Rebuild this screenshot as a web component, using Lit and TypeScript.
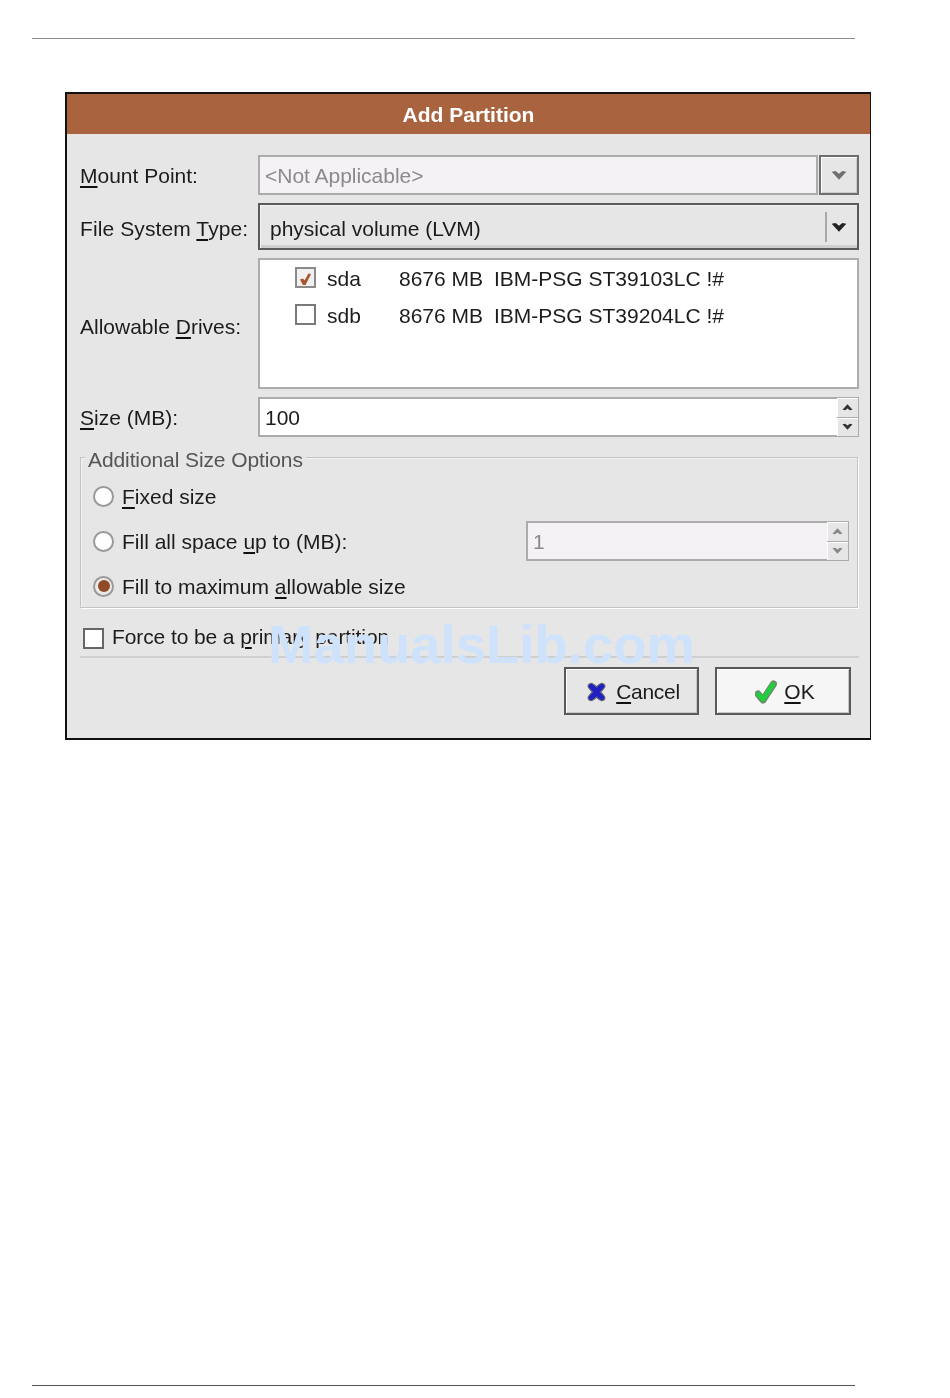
import { LitElement, html, css } from "lit";
import { customElement } from "lit/decorators.js";

const chevron = (size: number, color: string) => html`<svg width=${size} height=${size} viewBox="0 0 12 12"><path d="M0.5 3.5 L3.5 3 L6 5 L8.5 3 L11.5 3.5 L6 9.5 Z" fill=${color}></path></svg>`;
const chevronUp = (size: number, color: string) => html`<svg width=${size} height=${size} viewBox="0 0 12 12"><path d="M0.5 8.5 L3.5 9 L6 7 L8.5 9 L11.5 8.5 L6 2.5 Z" fill=${color}></path></svg>`;

@customElement("app-root")
export class AppRoot extends LitElement {
  static styles = css`
    :host { display: block; }
    .page {
      position: relative; height: 1398px; box-sizing: border-box; background: #fff;
      display: flex; flex-direction: column; padding: 38px 0 12px 32px;
      font-family: "Liberation Sans", Arial, sans-serif; font-size: 21px; color: #1c1c1c;
    }
    .rule { width: 823px; height: 1px; background: #8c8c8c; flex: none; }
    .rule.bottom { margin-top: auto; background: #555; }
    .dialog {
      width: 806px; height: 648px; box-sizing: border-box; margin: 53px 0 0 33px;
      border: 2px solid #111; border-right-width: 1px; background: #e6e6e6;
      display: flex; flex-direction: column; filter: blur(0.45px);
    }
    .title {
      height: 40px; box-sizing: border-box; padding-top: 2px; flex: none; background: #a9643f; color: #fff; font-weight: 700;
      display: flex; align-items: center; justify-content: center;
    }
    .body { padding: 21px 11px 0 13px; display: flex; flex-direction: column; }
    .form { display: grid; grid-template-columns: 178px 1fr; grid-template-rows: 40px 47px 131px 40px; row-gap: 8px; }
    .label { display: flex; align-items: center; white-space: nowrap; padding-top: 2px; box-sizing: border-box; }
    .label.mid { padding-top: 4px; letter-spacing: 0.1px; }
    .label.low { padding-top: 6px; }
    u { text-decoration-thickness: 2px; text-underline-offset: 3px; text-decoration-color: #111; }
    .mount { display: flex; gap: 1px; }
    .entry {
      flex: 1; box-sizing: border-box; border: 2px solid #acacac; display: flex; align-items: center;
      padding: 2px 0 0 5px; background: #fff; min-width: 0;
    }
    .entry.off { background: #f5f2f6; color: #8a8a8a; letter-spacing: -0.02px; }
    .drop {
      width: 40px; flex: none; box-sizing: border-box; border: 2px solid #6e6e6e; background: #e6e6e6;
      box-shadow: inset 1px 1px 0 #fff, inset -1px -1px 0 #ccc;
      display: flex; align-items: center; justify-content: center;
    }
    .combo {
      box-sizing: border-box; border: 2px solid #5a5a5a; background: #e6e6e6; display: flex; align-items: center;
      padding: 0 10px 0 10px; box-shadow: inset 1px 1px 0 #f4f4f4, inset 0 -3px 0 #cfcfcf;
    }
    .combo .value { flex: 1; padding-top: 4px; }
    .combo .sep { width: 2px; height: 30px; background: #a8a8a8; margin-right: 4px; }
    .list {
      box-sizing: border-box; border: 2px solid #adadad; background: #fff; padding: 0 0 0 35px;
      display: flex; flex-direction: column;
    }
    .drive { height: 37px; display: grid; grid-template-columns: 32px 72px 95px 1fr; align-items: center; white-space: nowrap; }
    .check {
      box-sizing: border-box; width: 21px; height: 21px; border: 2px solid #666; background: #fff; display: block;
    }
    .list .check { border-color: #7a7a7a; margin-top: -2px; }
    .list .check.on { background: #f2efef; border-color: #8a8a8a; }
    .spin { display: flex; box-sizing: border-box; border: 2px solid #acacac; background: #fff; }
    .spin.off { background: #f5f2f6; color: #8a8a8a; width: 323px; height: 40px; flex: none; margin-left: auto; }
    .spin .num { flex: 1; padding: 2px 0 0 5px; display: flex; align-items: center; }
    .spin .btns { width: 21px; display: flex; flex-direction: column; gap: 1px; background: #acacac; margin: -1px -1px -1px 0; }
    .spin .btns span {
      flex: 1; background: #e6e6e6; box-shadow: inset 1px 1px 0 #fff;
      display: flex; align-items: center; justify-content: center;
    }
    .group {
      position: relative; box-sizing: border-box; height: 151px; margin: 20px 1px 0 0; border: 1px solid #c4c4c4;
      padding: 18px 8px 0 12px;
      display: flex; flex-direction: column; gap: 5px; box-shadow: 1px 1px 0 #fff, inset 1px 1px 0 #f2f2f2;
    }
    .legend {
      position: absolute; left: 4px; top: -10px; padding: 0 3px; background: #e6e6e6; color: #555; line-height: 24px; letter-spacing: -0.1px;
    }
    .opt { height: 40px; display: flex; align-items: center; gap: 8px; white-space: nowrap; }
    .opt .txt { padding-top: 2px; }
    .radio {
      flex: none; width: 21px; height: 21px; box-sizing: border-box; border-radius: 50%; border: 2px solid #999; background: #fff;
      display: flex; align-items: center; justify-content: center;
    }
    .radio i { display: block; width: 12px; height: 12px; border-radius: 50%; background: #8f4a28; }
    .radio.on { background: #ece8e8; }
    .force { height: 36px; margin: 12px 0 0 3px; display: flex; align-items: center; gap: 8px; white-space: nowrap; }
    .force .txt { letter-spacing: -0.1px; margin-top: -2px; }
    .sep-h { height: 2px; background: #cfcfcf; }
    .buttons { display: flex; justify-content: flex-end; gap: 16px; padding: 9px 8px 0 0; }
    .btn {
      box-sizing: border-box; height: 48px; border: 2px solid #5a5a5a; background: #e6e6e6;
      box-shadow: inset 1px 1px 0 #fff, inset -1px -1px 0 #c8c8c8;
      display: flex; align-items: center; justify-content: center; padding-top: 2px;
    }
    .btn.cancel { width: 135px; gap: 10px; padding-left: 4px; }
    .btn.cancel span { letter-spacing: -0.3px; }
    .btn.ok { width: 136px; background: #f6f6f6; gap: 7px; padding-left: 4px; }
    .btn svg { display: block; }
    .mark {
      position: absolute; left: 268px; top: 614px; font-size: 54.5px; line-height: 62px; font-weight: 700; color: #cfe2fb;
      white-space: nowrap; pointer-events: none;
    }
  `;

  render() {
    return html`
      <div class="page">
        <div class="rule"></div>
        <div class="dialog">
          <div class="title">Add Partition</div>
          <div class="body">
            <div class="form">
              <div class="label"><span><u>M</u>ount Point:</span></div>
              <div class="mount">
                <div class="entry off">&lt;Not Applicable&gt;</div>
                <div class="drop">${chevron(16, "#707070")}</div>
              </div>
              <div class="label mid"><span>File System <u>T</u>ype:</span></div>
              <div class="combo">
                <span class="value">physical volume (LVM)</span>
                <span class="sep"></span>
                ${chevron(16, "#222")}
              </div>
              <div class="label low"><span>Allowable <u>D</u>rives:</span></div>
              <div class="list">
                <div class="drive">
                  <span class="check on"><svg width="17" height="17" viewBox="0 0 17 17"><path d="M3 8.5 L6 7.5 L7.5 9.5 L11.5 2.5 L14 3 L8.5 14 L6 14 Z" fill="#a9532c"></path></svg></span>
                  <span>sda</span><span>8676 MB</span><span>IBM-PSG ST39103LC !#</span>
                </div>
                <div class="drive">
                  <span class="check"></span>
                  <span>sdb</span><span>8676 MB</span><span>IBM-PSG ST39204LC !#</span>
                </div>
              </div>
              <div class="label"><span><u>S</u>ize (MB):</span></div>
              <div class="spin">
                <div class="num">100</div>
                <div class="btns"><span>${chevronUp(11, "#333")}</span><span>${chevron(11, "#333")}</span></div>
              </div>
            </div>
            <div class="group">
              <div class="legend">Additional Size Options</div>
              <div class="opt"><span class="radio"></span><span class="txt"><u>F</u>ixed size</span></div>
              <div class="opt"><span class="radio"></span><span class="txt">Fill all space <u>u</u>p to (MB):</span>
                <div class="spin off">
                  <div class="num">1</div>
                  <div class="btns"><span>${chevronUp(11, "#888")}</span><span>${chevron(11, "#888")}</span></div>
                </div>
              </div>
              <div class="opt"><span class="radio on"><i></i></span><span class="txt">Fill to maximum <u>a</u>llowable size</span></div>
            </div>
            <div class="force"><span class="check"></span><span class="txt">Force to be a <u>p</u>rimary partition</span></div>
            <div class="sep-h"></div>
            <div class="buttons">
              <div class="btn cancel">
                <svg width="19" height="20" viewBox="0 0 19 20"><path d="M3.5 1.5 C5 1 7 2.5 9.5 5 C12 2.5 14 1 15.5 1.5 C17.5 2 18.5 4 17.5 5.5 C16.5 7 15 8.5 13.5 10 C15 11.5 16.5 13 17.5 14.5 C18.5 16 17.5 18 15.5 18.5 C14 19 12 17.5 9.5 15 C7 17.5 5 19 3.5 18.5 C1.5 18 0.5 16 1.5 14.5 C2.5 13 4 11.5 5.5 10 C4 8.5 2.5 7 1.5 5.5 C0.5 4 1.5 2 3.5 1.5 Z" fill="#1f1fc4" stroke="#60607a" stroke-width="1.2"></path></svg>
                <span><u>C</u>ancel</span>
              </div>
              <div class="btn ok">
                <svg width="22" height="25" viewBox="0 0 22 25"><path d="M3 14 L8 20 L18.5 4" fill="none" stroke="#6f8a6f" stroke-width="7" stroke-linecap="round" stroke-linejoin="round"></path><path d="M3.5 14.5 L8 19.5 L18 4.5" fill="none" stroke="#1fcf3c" stroke-width="4.5" stroke-linecap="round" stroke-linejoin="round"></path></svg>
                <span><u>O</u>K</span>
              </div>
            </div>
          </div>
        </div>
        <div class="rule bottom"></div>
        <div class="mark">ManualsLib.com</div>
      </div>
    `;
  }
}
